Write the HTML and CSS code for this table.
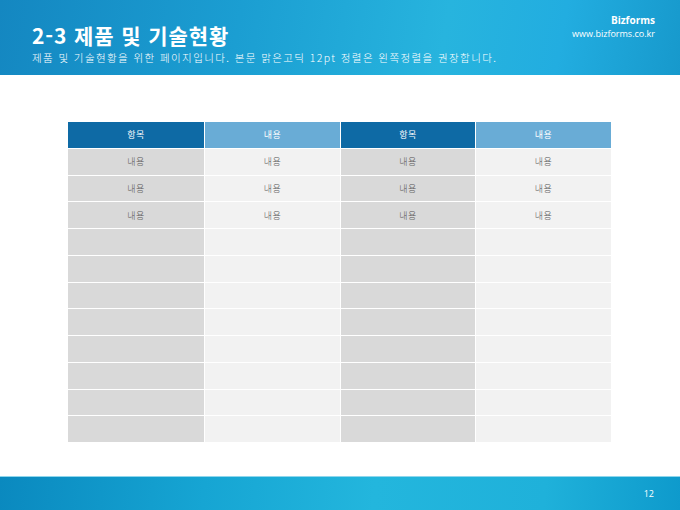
FILE: index.html
```html
<!DOCTYPE html>
<html lang="ko">
<head>
<meta charset="utf-8">
<link rel="stylesheet" href="styles.css">
</head>
<body>
<div class="slide">
  <header class="top">
    <div class="titles">
      <h1 class="title">2-3 제품 및 기술현황</h1>
      <p class="subtitle">제품 및 기술현황을 위한 페이지입니다. 본문 맑은고딕 12pt 정렬은 왼쪽정렬을 권장합니다.</p>
    </div>
    <div class="brand">
      <div class="brand-name">Bizforms</div>
      <div class="brand-url">www.bizforms.co.kr</div>
    </div>
  </header>
  <main class="content">
    <div class="table">
      <div class="cell h dark">항목</div><div class="cell h light">내용</div><div class="cell h dark">항목</div><div class="cell h light">내용</div>
      <div class="cell a">내용</div><div class="cell b">내용</div><div class="cell a">내용</div><div class="cell b">내용</div>
      <div class="cell a">내용</div><div class="cell b">내용</div><div class="cell a">내용</div><div class="cell b">내용</div>
      <div class="cell a">내용</div><div class="cell b">내용</div><div class="cell a">내용</div><div class="cell b">내용</div>
      <div class="cell a"></div><div class="cell b"></div><div class="cell a"></div><div class="cell b"></div>
      <div class="cell a"></div><div class="cell b"></div><div class="cell a"></div><div class="cell b"></div>
      <div class="cell a"></div><div class="cell b"></div><div class="cell a"></div><div class="cell b"></div>
      <div class="cell a"></div><div class="cell b"></div><div class="cell a"></div><div class="cell b"></div>
      <div class="cell a"></div><div class="cell b"></div><div class="cell a"></div><div class="cell b"></div>
      <div class="cell a"></div><div class="cell b"></div><div class="cell a"></div><div class="cell b"></div>
      <div class="cell a"></div><div class="cell b"></div><div class="cell a"></div><div class="cell b"></div>
      <div class="cell a"></div><div class="cell b"></div><div class="cell a"></div><div class="cell b"></div>
    </div>
  </main>
  <footer class="bottom">
    <span class="page">12</span>
  </footer>
</div>
</body>
</html>
```

FILE: styles.css
```css
* { box-sizing: border-box; }
html, body { margin: 0; padding: 0; background: #fff; }
body { font-family: "Noto Sans CJK KR", "Noto Sans", sans-serif; }

.slide {
  width: 680px;
  height: 510px;
  display: flex;
  flex-direction: column;
  overflow: hidden;
}

.top {
  height: 75px;
  flex: none;
  display: flex;
  justify-content: space-between;
  background: linear-gradient(100deg, #1487c1 0%, #1b9ed2 35%, #27b4de 65%, #22ade0 82%, #1799cc 100%);
  color: #fff;
}

.titles { padding: 22px 0 0 32px; }

.title {
  margin: 0;
  font-size: 21px;
  font-weight: 700;
  letter-spacing: 0.9px;
  line-height: 26px;
}

.subtitle {
  margin: 3px 0 0 0;
  font-size: 10.5px;
  font-weight: 300;
  line-height: 14px;
  letter-spacing: 1.4px;
}

.brand {
  padding: 14px 25px 0 0;
  text-align: right;
}

.brand-name {
  font-family: "Open Sans", "Noto Sans", sans-serif;
  font-size: 10px;
  font-weight: 700;
  line-height: 13px;
}

.brand-url {
  font-family: "Open Sans", "Noto Sans", sans-serif;
  font-size: 9px;
  line-height: 13px;
}

.content {
  flex: 1;
  padding: 47px 0 0 68px;
}

.table {
  width: 543px;
  display: grid;
  grid-template-columns: 136px 135px 134px 135px;
  column-gap: 1px;
  row-gap: 1px;
  grid-auto-rows: 25.75px;
}

.cell {
  display: flex;
  align-items: center;
  justify-content: center;
  font-size: 9px;
  font-weight: 300;
  letter-spacing: 0.5px;
  color: #555;
}

.cell.h { color: #fff; font-weight: 400; }
.cell.dark { background: #0e6aa5; }
.cell.light { background: #69acd6; }
.cell.a { background: #d9d9d9; }
.cell.b { background: #f2f2f2; }

.bottom {
  height: 34px;
  flex: none;
  display: flex;
  align-items: center;
  justify-content: flex-end;
  padding-right: 26px;
  border-top: 1px solid #8fd6ec;
  background: linear-gradient(95deg, #0a89bf 0%, #16a5d3 30%, #23b6dd 55%, #1fb1da 80%, #0e9acc 100%);
}

.page {
  font-family: "Open Sans", "Noto Sans", sans-serif;
  font-size: 9px;
  color: #fff;
}
```
